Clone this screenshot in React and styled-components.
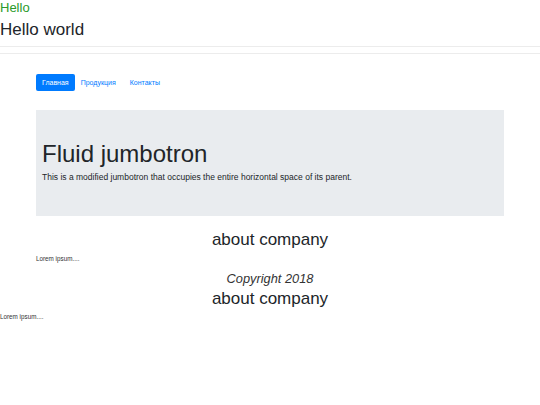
import React from "react";
import styled, { createGlobalStyle } from "styled-components";

const GlobalStyle = createGlobalStyle`
  html, body {
    margin: 0;
    padding: 0;
    background: #fff;
    font-family: "Liberation Sans", Arial, sans-serif;
    color: #212529;
  }
`;

const Page = styled.div`
  width: 540px;
  display: flex;
  flex-direction: column;
`;

const Greeting = styled.div`
  font-size: 13px;
  line-height: 16px;
  color: #2a9a2a;
`;

const Title = styled.div`
  margin-top: 4px;
  font-size: 17px;
  line-height: 20px;
  color: #212529;
`;

const Rule = styled.div`
  height: 1px;
  background: #ececec;
  margin-top: ${props => props.gap}px;
`;

const Container = styled.div`
  width: 468px;
  margin: 0 auto;
  display: flex;
  flex-direction: column;
`;

const Nav = styled.ul`
  list-style: none;
  margin: 20px 0 0;
  padding: 0;
  display: flex;
`;

const NavLink = styled.li`
  height: 17px;
  padding: 0 6px;
  margin-right: ${props => (props.active ? "0" : "2px")};
  display: flex;
  align-items: center;
  font-size: 7px;
  border-radius: 2px;
  color: ${props => (props.active ? "#fff" : "#007bff")};
  background: ${props => (props.active ? "#007bff" : "transparent")};
`;

const Jumbotron = styled.div`
  margin-top: 19px;
  height: 106px;
  box-sizing: border-box;
  background: #e9ecef;
  padding: 30px 6px 0;
`;

const Display = styled.h1`
  margin: 0;
  font-size: 24px;
  line-height: 28px;
  font-weight: 400;
`;

const Lead = styled.p`
  margin: 4px 0 0;
  font-size: 8.5px;
  line-height: 10px;
`;

const Heading = styled.h2`
  margin: ${props => props.top}px 0 0;
  text-align: center;
  font-size: 17px;
  line-height: 20px;
  font-weight: 400;
`;

const Small = styled.p`
  margin: ${props => props.top}px 0 0;
  font-size: 6.3px;
  line-height: 8px;
  color: #333;
`;

const Footer = styled.div`
  margin-top: 8px;
  text-align: center;
  font-style: italic;
  font-size: 12.8px;
  line-height: 16px;
  color: #333;
`;

const Section = ({ top, gap }) => (
  <>
    <Heading top={top}>about company</Heading>
    <Small top={gap}>Lorem ipsum....</Small>
  </>
);

export default function App() {
  return (
    <Page>
      <GlobalStyle />
      <Greeting>Hello</Greeting>
      <Title>Hello world</Title>
      <Rule gap={6} />
      <Rule gap={6} />
      <Container>
        <Nav>
          <NavLink active>Главная</NavLink>
          <NavLink>Продукция</NavLink>
          <NavLink>Контакты</NavLink>
        </Nav>
        <Jumbotron>
          <Display>Fluid jumbotron</Display>
          <Lead>
            This is a modified jumbotron that occupies the entire horizontal
            space of its parent.
          </Lead>
        </Jumbotron>
        <Section top={14} gap={5} />
      </Container>
      <Footer>Copyright 2018</Footer>
      <Section top={2} gap={4} />
    </Page>
  );
}
